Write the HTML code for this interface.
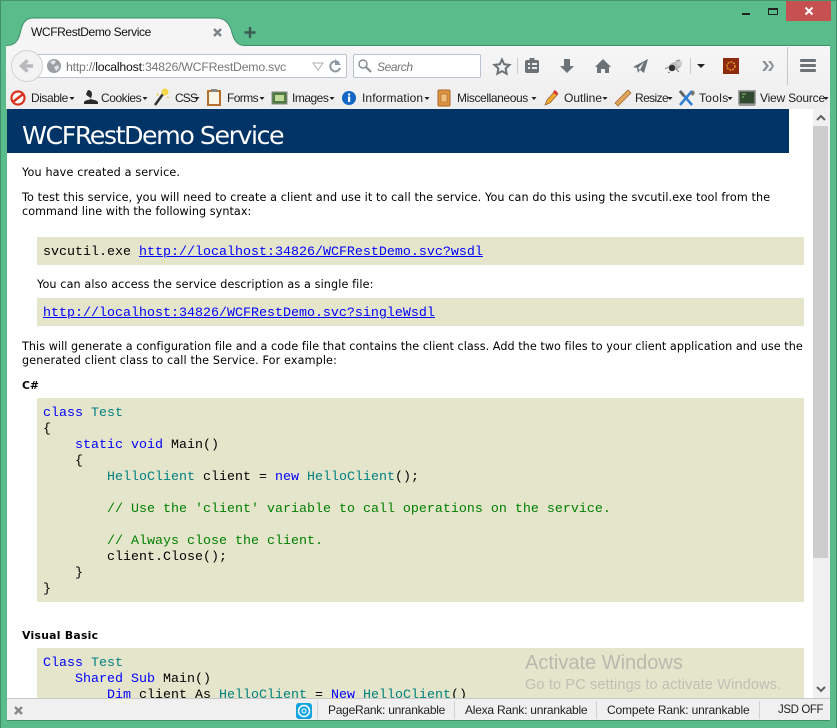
<!DOCTYPE html>
<html><head><meta charset="utf-8"><style>
html,body{margin:0;padding:0;width:837px;height:728px;overflow:hidden;background:#5ABB8B}
.a{position:absolute;white-space:pre;line-height:14px}
.u{font:12px/14px "Liberation Sans",sans-serif;color:#222}
.v{font:11.2px/13px "DejaVu Sans",sans-serif;color:#000}
.m{font:13.33px/16px "Liberation Mono",monospace;color:#000}
.b{color:#00f}.t{color:#008080}.g{color:#008000}
.l{color:#00f;text-decoration:underline}
.box{position:absolute;left:37px;width:767px;background:#E5E5CC;border:0}
svg{position:absolute;overflow:visible}
</style></head><body>
<div style="position:absolute;left:0;top:0;width:837px;height:728px;box-sizing:border-box;border:1px solid #3f8f6a;border-bottom:0;border-top-color:#46946f"></div>
<!-- window controls -->
<div style="position:absolute;left:786px;top:1px;width:45px;height:20px;background:#C75050"></div>
<svg style="left:0;top:0" width="837" height="30">
<path d="M805.500 7.500l7 7M812.500 7.500l-7 7" stroke="#fff" stroke-width="2"/>
<rect x="742" y="13" width="8" height="2" fill="#222"/>
<rect x="768.500" y="8.500" width="9" height="6" fill="none" stroke="#222"/><rect x="768" y="8" width="10" height="2" fill="#222"/>
</svg>
<!-- chrome bg -->
<div style="position:absolute;left:6px;top:45px;width:824px;height:64px;background:linear-gradient(#f6f6f6,#eeeeee);border-top:1px solid #3f8f6a;box-sizing:border-box"></div>
<!-- tab -->
<svg style="left:0;top:0" width="260" height="50">
<path d="M7 45.500C16 45.500 19 39 21 30C23 22 26 18 34 18H216C224 18 228 22 231 29C233 38 236 45.500 244 45.500V47H7Z" fill="#f5f5f5" stroke="none"/>
<path d="M7 45.500C16 45.500 19 39 21 30C23 22 26 18 34 18H216C224 18 228 22 231 29C233 38 236 45.500 244 45.500" fill="none" stroke="#3f8f6a"/>
<path d="M214 29l7 7M221 29l-7 7" stroke="#7d838a" stroke-width="2.400"/>
<path d="M250 27v11M244.500 32.500h11" stroke="#3c5a54" stroke-width="2.400"/>
</svg>
<div class="a u" style="left:31px;top:25px;letter-spacing:-.39px;color:#111">WCFRestDemo Service</div>
<!-- url bar -->
<div style="position:absolute;left:36px;top:54px;width:311px;height:24px;box-sizing:border-box;background:#fff;border:1px solid #b9c4ce;border-radius:0 2px 2px 0"></div>
<svg style="left:0;top:45px" width="360" height="40">
<circle cx="27" cy="21" r="15.500" fill="#f3f3f3" stroke="#d2d2d2"/>
<path d="M33 21H23M27.500 15.500L21.500 21L27.500 26.500" fill="none" stroke="#b7b9bc" stroke-width="3.500"/>
<circle cx="54" cy="21" r="7" fill="#9b9fa3"/>
<path d="M50 17l4-2 2 2-3 3zM54 22l4-2 1 3-3 3z" fill="#e4e5e6"/>
<path d="M313 18h10l-5 7z" fill="#fff" stroke="#a9b0b6"/>
<path d="M339 18a5 5 0 1 0 1 5" fill="none" stroke="#8e979f" stroke-width="2"/><path d="M335 14v6h6z" fill="#8e979f"/>
</svg>
<div class="a u" style="left:66px;top:60px;color:#777;font-size:12.300px;letter-spacing:-.22px">http://<span style="color:#111">localhost</span>:34826/WCFRestDemo.svc</div>
<!-- search -->
<div style="position:absolute;left:353px;top:54px;width:128px;height:24px;box-sizing:border-box;background:#fff;border:1px solid #b9c4ce;border-radius:2px"></div>
<svg style="left:0;top:45px" width="400" height="40"><circle cx="363" cy="19" r="4" fill="none" stroke="#8a9096" stroke-width="1.500"/><path d="M366 22l5 5" stroke="#8a9096" stroke-width="2.200"/></svg>
<div class="a u" style="left:377px;top:60px;font-style:italic;color:#777;letter-spacing:-.4px">Search</div>
<!-- toolbar icons -->
<svg style="left:490px;top:45px" width="347" height="40" fill="#6d7277">
<path d="M12 14.500l2.200 4.800 5.300.6-3.900 3.600 1 5.200-4.600-2.600-4.600 2.600 1-5.200-3.900-3.600 5.300-.6z" fill="none" stroke="#6d7277" stroke-width="2"/>
<rect x="27" y="13" width="1" height="16" fill="#c8cbce"/>
<path d="M37 15h2.500v-2h5v2H47a2 2 0 0 1 2 2v9a2 2 0 0 1-2 2H37a2 2 0 0 1-2-2V17a2 2 0 0 1 2-2z"/>
<path d="M38 18h2v2h-2zM42 18h5v2h-5zM38 22h2v2h-2zM42 22h5v2h-5z" fill="#eee"/>
<path d="M74 14h6v7h4l-7 7-7-7h4z"/>
<path d="M113 14l8 8h-2v6h-4v-4h-4v4h-4v-6h-2z"/>
<path d="M158 14l-4 14-4-3-2 3-1-5-4-1z"/><path d="M148 23l6-6-4 8z" fill="#eee"/>
<g transform="translate(8 0)"><ellipse cx="177" cy="21" rx="7" ry="4" fill="#bbb" transform="rotate(-20 177 21)"/><circle cx="181" cy="18" r="3" fill="#ccc"/><circle cx="174" cy="23" r="3.200" fill="#333"/><path d="M178 16l4-1M170 22l-3 2M172 27l-2 1M178 24l3 3" stroke="#888" fill="none"/></g>
<rect x="200" y="13" width="1" height="16" fill="#c8cbce"/>
<path d="M207 19h8l-4 4z" fill="#222"/>
<rect x="233" y="13" width="16" height="16" fill="#8E2A10"/><circle cx="241" cy="21" r="4" fill="none" stroke="#E69A22" stroke-width="1.500" stroke-dasharray="2 1"/>
<path d="M272 16l4 5-4 5h3l4-5-4-5zM278 16l4 5-4 5h3l3-5-3-5z" fill="#8b9096"/>
<rect x="297" y="2" width="1" height="38" fill="#c6c9cc"/>
</svg>
<svg style="left:800px;top:59px" width="20" height="16" fill="#6d7277"><rect x="0" y="0" width="16" height="3" rx="1"/><rect x="0" y="5" width="16" height="3" rx="1"/><rect x="0" y="10" width="16" height="3" rx="1"/></svg>
<!-- bookmark bar -->
<svg style="left:0;top:86px" width="837" height="24">
<circle cx="18" cy="12" r="6.500" fill="#fff" stroke="#d8311f" stroke-width="2.200"/><path d="M13.500 15.500l9-7" stroke="#d8311f" stroke-width="2.500"/>
<path d="M85 4a4 4 0 0 1 4 4c0 2-1 3-1 5 2 1 6 1 7 3v2H81v-2c1-2 5-2 7-3 0-2-5-3-5-5z" fill="#2a2a2a" transform="translate(3 0)"/>
<path d="M155 19l8-11" stroke="#333" stroke-width="2.500"/><circle cx="165" cy="6" r="3.500" fill="#f5d648"/><path d="M157 7l1 3M167 11l2 1" stroke="#f0c030"/>
<rect x="208" y="5" width="12" height="14" fill="#fbf5e6" stroke="#b5702e" stroke-width="2"/><rect x="211" y="3" width="6" height="3" fill="#8a8a8a"/>
<rect x="272" y="6" width="15" height="12" fill="#4d7b42" stroke="#888"/><rect x="275" y="9" width="9" height="6" fill="#c2d99c"/>
<circle cx="349" cy="12" r="7" fill="#1266c6"/><rect x="348" y="10.500" width="2.200" height="5.500" fill="#fff"/><rect x="348" y="7.500" width="2.200" height="2" fill="#fff"/>
<rect x="438" y="4" width="12" height="16" rx="1" fill="#dc9440" stroke="#a9652a"/><rect x="441" y="8" width="6" height="8" fill="#efc07c" stroke="#a9652a" stroke-width=".6"/>
<path d="M545 19l2-5 8-9 3 3-8 9z" fill="#f0a92e" stroke="#8b5a1e" stroke-width=".7"/><path d="M553 6l2-2 3 3-2 2z" fill="#d33"/>
<path d="M615 17l13-13 3 3-13 13z" fill="#dfa45c" stroke="#a9702f" stroke-width=".8"/>
<path d="M680 5l12 14" stroke="#2f7fd0" stroke-width="2.500"/><path d="M692 5l-12 14" stroke="#2f7fd0" stroke-width="2.500"/><path d="M680 5l4 5" stroke="#666" stroke-width="3"/><path d="M693 4l-3 4 3 2 2-3" fill="#777"/>
<rect x="739" y="5" width="16" height="13" fill="#2f4a2f" stroke="#888" stroke-width="1.500"/><path d="M742 8h4M742 11h2" stroke="#7dcc6a"/><rect x="739" y="18" width="16" height="2" fill="#9a9a9a"/>
<g fill="#222"><path d="M69.500 11h5l-2.500 3zM142.500 11h5l-2.500 3zM194.500 11h5l-2.500 3zM259.500 11h5l-2.500 3zM329.500 11h5l-2.500 3zM424.500 11h5l-2.500 3zM531.500 11h5l-2.500 3zM602.500 11h5l-2.500 3zM667.500 11h5l-2.500 3zM727.500 11h5l-2.500 3zM823.500 11h5l-2.500 3z"/></g>
</svg>
<div class="a u" style="left:31px;top:91px;letter-spacing:-.45px">Disable</div>
<div class="a u" style="left:101px;top:91px;letter-spacing:-.45px">Cookies</div>
<div class="a u" style="left:175px;top:91px;letter-spacing:-.9px">CSS</div>
<div class="a u" style="left:227px;top:91px;letter-spacing:-.6px">Forms</div>
<div class="a u" style="left:292px;top:91px;letter-spacing:-.5px">Images</div>
<div class="a u" style="left:362px;top:91px;letter-spacing:.1px">Information</div>
<div class="a u" style="left:457px;top:91px;letter-spacing:-.4px">Miscellaneous</div>
<div class="a u" style="left:564px;top:91px">Outline</div>
<div class="a u" style="left:635px;top:91px;letter-spacing:-.6px">Resize</div>
<div class="a u" style="left:699px;top:91px;letter-spacing:.3px">Tools</div>
<div class="a u" style="left:760px;top:91px;letter-spacing:-.2px">View Source</div>
<!-- page -->
<div style="position:absolute;left:7px;top:109px;width:823px;height:589px;background:#fff;overflow:hidden">
<div style="position:absolute;left:0;top:0;width:782px;height:44px;background:#003366"></div>
<div class="a" style="left:15px;top:11px;font:25.300px/32px 'DejaVu Sans',sans-serif;color:#fff;letter-spacing:-1.470px">WCFRestDemo Service</div>
<div style="position:absolute;left:806px;top:0;width:17px;height:589px;background:#f0f0f0"></div>
<div style="position:absolute;left:806px;top:17px;width:15px;height:432px;background:#cdcdcd"></div>
<svg style="left:806px;top:0" width="17" height="589"><path d="M4 11l4-4 4 4" fill="none" stroke="#606060" stroke-width="2"/><path d="M4 578l4 4 4-4" fill="none" stroke="#606060" stroke-width="2"/></svg>
</div>
<div class="a v" style="left:22px;top:166px;letter-spacing:.15px">You have created a service.</div>
<div class="a v" style="left:22px;top:191px;letter-spacing:.11px">To test this service, you will need to create a client and use it to call the service. You can do this using the svcutil.exe tool from the</div>
<div class="a v" style="left:22px;top:205px;letter-spacing:.05px">command line with the following syntax:</div>
<div class="box" style="top:237px;height:28px"></div>
<div class="a m" style="left:43px;top:245px">svcutil.exe <span class="l">http://localhost:34826/WCFRestDemo.svc?wsdl</span></div>
<div class="a v" style="left:37px;top:278px;letter-spacing:.117px">You can also access the service description as a single file:</div>
<div class="box" style="top:298px;height:28px"></div>
<div class="a m" style="left:43px;top:306px"><span class="l">http://localhost:34826/WCFRestDemo.svc?singleWsdl</span></div>
<div class="a v" style="left:22px;top:340px;letter-spacing:.056px">This will generate a configuration file and a code file that contains the client class. Add the two files to your client application and use the</div>
<div class="a v" style="left:22px;top:354px;letter-spacing:.127px">generated client class to call the Service. For example:</div>
<div class="a v" style="left:22px;top:379px;font-weight:bold;font-size:10.800px">C#</div>
<div class="box" style="top:398px;height:204px"></div>
<div class="a m" style="left:43px;top:406px"><span class="b">class</span> <span class="t">Test</span>
{
    <span class="b">static</span> <span class="b">void</span> Main()
    {
        <span class="t">HelloClient</span> client = <span class="b">new</span> <span class="t">HelloClient</span>();

        <span class="g">// Use the 'client' variable to call operations on the service.</span>

        <span class="g">// Always close the client.</span>
        client.Close();
    }
}</div>
<div class="a v" style="left:22px;top:629px;font-weight:bold;font-size:10.800px;letter-spacing:.3px">Visual Basic</div>
<div style="position:absolute;left:0;top:648px;width:813px;height:50px;overflow:hidden">
<div class="box" style="top:0;height:60px"></div>
<div class="a m" style="left:43px;top:6px;margin-top:2px"><span class="b">Class</span> <span class="t">Test</span>
    <span class="b">Shared</span> <span class="b">Sub</span> Main()
        <span class="b">Dim</span> client As <span class="t">HelloClient</span> = <span class="b">New</span> <span class="t">HelloClient</span>()</div>
</div>
<div class="a" style="left:525px;top:650px;font:20px/26px 'Liberation Sans',sans-serif;color:#b9b9ae">Activate Windows</div>
<div class="a" style="left:525px;top:676px;font:14.500px/18px 'Liberation Sans',sans-serif;color:#bfbfb4;letter-spacing:.15px">Go to PC settings to activate Windows.</div>
<!-- status bar -->
<div style="position:absolute;left:7px;top:698px;width:823px;height:23px;box-sizing:border-box;background:#f0f0f0;border-top:1px solid #c8c8c8;border-bottom:1px solid #3f8f6a"></div>
<svg style="left:0;top:698px" width="837" height="24">
<path d="M15 9l7 7M22 9l-7 7" stroke="#888" stroke-width="2.400"/>
<rect x="296" y="5" width="16" height="16" rx="3" fill="#12a5e2"/><circle cx="304" cy="13" r="5.500" fill="none" stroke="#fff" stroke-width="1.500"/><circle cx="304" cy="13" r="2" fill="none" stroke="#fff"/>
<g fill="#d2d2d2"><rect x="317" y="3" width="1" height="18"/><rect x="454" y="3" width="1" height="18"/><rect x="596" y="3" width="1" height="18"/><rect x="759" y="3" width="1" height="18"/></g>
</svg>
<div class="a u" style="left:328px;top:703px;letter-spacing:-.25px">PageRank: unrankable</div>
<div class="a u" style="left:465px;top:703px;letter-spacing:-.23px">Alexa Rank: unrankable</div>
<div class="a u" style="left:607px;top:703px;letter-spacing:-.15px">Compete Rank: unrankable</div>
<div class="a u" style="left:778px;top:703px;font-size:11.500px;letter-spacing:-.4px">JSD OFF</div>
</body></html>
